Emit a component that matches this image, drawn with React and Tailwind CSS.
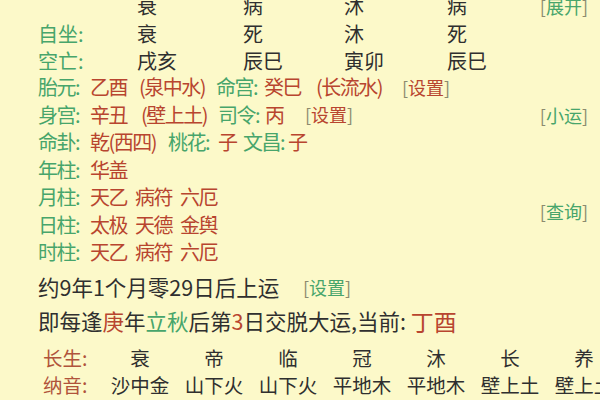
import React from 'react';

const GREEN = 'text-[#47a56b]';
const RED = 'text-[#b8452f]';

const topRows = [
  { label: '', vals: ['衰', '病', '沐', '病'], link: '展开' },
  { label: '自坐:', vals: ['衰', '死', '沐', '死'] },
  { label: '空亡:', vals: ['戌亥', '辰巳', '寅卯', '辰巳'] },
];

const shensha = [
  { label: '年柱:', val: ['华盖'] },
  { label: '月柱:', val: ['天乙', '病符', '六厄'] },
  { label: '日柱:', val: ['太极', '天德', '金舆'] },
  { label: '时柱:', val: ['天乙', '病符', '六厄'] },
];

const changsheng = ['衰', '帝', '临', '冠', '沐', '长', '养'];
const nayin = ['沙中金', '山下火', '山下火', '平地木', '平地木', '壁上土', '壁上土'];
const shishen = ['正官', '偏财', '食神', '比肩', '劫财', '伤官', '正印'];

function Link({ text, tone = 'green' }) {
  return (
    <span className="text-[18px] tracking-normal text-[#8c8a6e]">
      [<span className={tone === 'green' ? GREEN : RED}>{text}</span>]
    </span>
  );
}

export default function App() {
  return (
    <div className="w-[600px] h-[400px] overflow-hidden bg-[#fcf9c9] font-['Noto_Sans_CJK_SC',sans-serif] text-[20px] text-[#2f2f2f]">
      <div className="-mt-[9px] pl-[38px] pr-[12px]">
        {/* 星运 / 自坐 / 空亡 */}
        {topRows.map((row, i) => (
          <div
            key={i}
            className="grid grid-cols-[99px_106px_101px_103px_90px_1fr] h-[27.5px] items-center"
          >
            <span className={GREEN}>{row.label}</span>
            {row.vals.map((v, j) => (
              <span key={j}>{v}</span>
            ))}
            <span className="text-right">{row.link ? <Link text={row.link} /> : null}</span>
          </div>
        ))}

        <div className="tracking-[-1.5px]">
          {/* 胎元 / 命宫 */}
          <div className="flex h-[27.5px] items-center">
            <span className={`${GREEN} w-[52px]`}>胎元:</span>
            <span className={`${RED} w-[49px]`}>乙酉</span>
            <span className={`${RED} w-[77px]`}>(泉中水)</span>
            <span className={`${GREEN} w-[48px]`}>命宫:</span>
            <span className={`${RED} w-[52px]`}>癸巳</span>
            <span className={`${RED} w-[86px]`}>(长流水)</span>
            <Link text="设置" tone="red" />
          </div>

          {/* 身宫 / 司令 */}
          <div className="flex h-[27.5px] items-center">
            <span className={`${GREEN} w-[52px]`}>身宫:</span>
            <span className={`${RED} w-[51px]`}>辛丑</span>
            <span className={`${RED} w-[77px]`}>(壁上土)</span>
            <span className={`${GREEN} w-[47px]`}>司令:</span>
            <span className={`${RED} w-[40px]`}>丙</span>
            <Link text="设置" tone="red" />
            <span className="ml-auto">
              <Link text="小运" />
            </span>
          </div>

          {/* 命卦 + 神煞 */}
          <div className="flex">
            <div className="flex-1">
              <div className="flex h-[27.5px] items-center">
                <span className={`${GREEN} w-[52px]`}>命卦:</span>
                <span className={`${RED} w-[78px]`}>乾(西四)</span>
                <span className={`${GREEN} w-[50px]`}>桃花:</span>
                <span className={`${RED} w-[25px]`}>子</span>
                <span className={`${GREEN} w-[45px]`}>文昌:</span>
                <span className={RED}>子</span>
              </div>
              {shensha.map((r) => (
                <div key={r.label} className="flex h-[27.5px] items-center">
                  <span className={`${GREEN} w-[52px]`}>{r.label}</span>
                  <span className={`${RED} flex gap-[8px]`}>
                    {r.val.map((w, k) => (
                      <span key={k}>{w}</span>
                    ))}
                  </span>
                </div>
              ))}
            </div>
            <div className="pt-[69px]">
              <div className="h-[27px] flex items-center">
                <Link text="查询" />
              </div>
            </div>
          </div>
        </div>

        {/* 起运 */}
        <div className="mt-[4px] flex h-[34px] items-center text-[21.5px]">
          <span className="w-[265px]">约9年1个月零29日后上运</span>
          <Link text="设置" />
        </div>
        <div className="flex h-[34px] items-center text-[21.5px] whitespace-pre">
          <span>即每逢</span>
          <span className={RED}>庚</span>
          <span>年</span>
          <span className={GREEN}>立秋</span>
          <span>后第</span>
          <span className={RED}>3</span>
          <span>日交脱大运,当前: </span>
          <span className={`${RED} text-[23px]`}>丁酉</span>
        </div>
      </div>

      {/* 大运表 */}
      <div className="mt-[4.5px] pl-[43px] text-[19.5px]">
        <div className="grid grid-cols-[60px_repeat(7,74px)] h-[27px] items-center">
          <span className="text-[#b0533b]">长生:</span>
          {changsheng.map((v, i) => (
            <span key={i} className="text-center">{v}</span>
          ))}
        </div>
        <div className="grid grid-cols-[60px_repeat(7,74px)] h-[27px] items-center">
          <span className="text-[#b0533b]">纳音:</span>
          {nayin.map((v, i) => (
            <span key={i} className="text-center">{v}</span>
          ))}
        </div>
        <div className="grid grid-cols-[60px_repeat(7,74px)] h-[27px] items-center">
          <span className="text-[#b0533b]">十神:</span>
          {shishen.map((v, i) => (
            <span key={i} className="text-center">{v}</span>
          ))}
        </div>
      </div>
    </div>
  );
}
